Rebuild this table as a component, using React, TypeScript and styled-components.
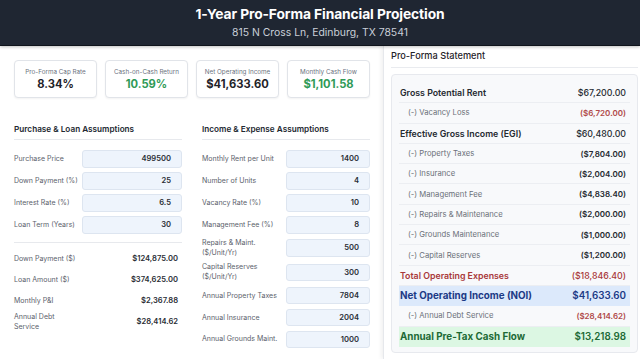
import React from "react";
import styled, { createGlobalStyle } from "styled-components";

const Global = createGlobalStyle`
  html, body { margin: 0; padding: 0; background: #ffffff; }
  body { font-family: Inter, "Noto Sans", Arial, sans-serif; color: #1f2937; }
  * { box-sizing: border-box; }
`;

const Page = styled.div`
  width: 640px;
  height: 359px;
  overflow: hidden;
  display: flex;
  flex-direction: column;
`;

const Header = styled.header`
  height: 46px;
  flex: none;
  background: #1f2632;
  border-bottom: 1px solid #0f141c;
  display: flex;
  flex-direction: column;
  align-items: center;
  justify-content: center;
  gap: 3px;
  box-shadow: 0 1px 3px rgba(0,0,0,0.25);
  position: relative;
  z-index: 2;
`;

const Title = styled.h1`
  margin: 0;
  font-size: 13.8px;
  font-weight: 700;
  color: #ffffff;
  letter-spacing: -0.1px;
  line-height: 17px;
`;

const Subtitle = styled.div`
  font-size: 10.4px;
  color: #c9cfd8;
  line-height: 13px;
`;

const Body = styled.div`
  flex: 1;
  display: flex;
  min-height: 0;
`;

const Main = styled.main`
  width: 383px;
  flex: none;
  padding: 14px 13px 0 14px;
  display: flex;
  flex-direction: column;
`;

const KpiRow = styled.div`
  display: grid;
  grid-template-columns: repeat(4, 1fr);
  gap: 8px;
`;

const KpiCard = styled.div`
  height: 38px;
  border: 1px solid #e1e4e9;
  border-radius: 4px;
  background: #fff;
  box-shadow: 0 1px 2px rgba(0,0,0,0.05);
  display: flex;
  flex-direction: column;
  align-items: center;
  justify-content: center;
  gap: 1px;
`;

const KpiLabel = styled.div`
  font-size: 6.3px;
  color: #6b7280;
  line-height: 8px;
`;

const KpiValue = styled.div<{ $green?: boolean }>`
  font-size: 11.2px;
  font-weight: 700;
  line-height: 14px;
  color: ${p => (p.$green ? "#2f9a57" : "#1f2329")};
`;

const Columns = styled.div`
  display: grid;
  grid-template-columns: 168px 168px;
  gap: 20px;
  margin-top: 25px;
`;

const Column = styled.section`
  display: flex;
  flex-direction: column;
`;

const SectionTitle = styled.h2`
  margin: 0;
  font-size: 8.2px;
  font-weight: 600;
  color: #222831;
  line-height: 12px;
  padding-bottom: 4px;
  border-bottom: 1px solid #e7e9ed;
`;

const Fields = styled.div`
  display: flex;
  flex-direction: column;
  gap: 4.4px;
  margin-top: 10px;
`;

const FieldRow = styled.div<{ $labelWidth: number }>`
  display: grid;
  grid-template-columns: ${p => p.$labelWidth}px 1fr;
  align-items: center;
`;

const FieldLabel = styled.label`
  font-size: 7px;
  color: #5b616b;
  line-height: 10px;
  white-space: nowrap;
`;

const InputBox = styled.div`
  height: 17.6px;
  background: #eef4fc;
  border: 1px solid #dde5f0;
  border-radius: 3px;
  display: flex;
  align-items: center;
  justify-content: flex-end;
  padding-right: 10px;
  font-size: 7.6px;
  font-weight: 600;
  color: #2a2e35;
`;

const Results = styled.div`
  margin-top: 8px;
  border-top: 1px solid #e7e9ed;
  padding-top: 6px;
  display: flex;
  flex-direction: column;
  gap: 1px;
`;

const ResultRow = styled.div`
  min-height: 20px;
  display: flex;
  align-items: center;
  justify-content: space-between;
  padding-right: 4px;
`;

const ResultLabel = styled.div`
  font-size: 7px;
  color: #5b616b;
  line-height: 10px;
  white-space: nowrap;
`;

const ResultValue = styled.div`
  font-size: 7.6px;
  font-weight: 600;
  color: #2a2e35;
`;

const Aside = styled.aside`
  flex: 1;
  background: #fff;
  border-left: 1px solid #e6e8ec;
  box-shadow: -2px 0 4px rgba(0,0,0,0.06);
  padding: 3px 2px 0 7px;
  display: flex;
  flex-direction: column;
`;

const AsideTitle = styled.h2`
  margin: 0;
  font-size: 9.2px;
  font-weight: 500;
  color: #1f2329;
  line-height: 14px;
  padding-bottom: 4px;
  border-bottom: 1px solid #e9ebef;
`;

const StatementCard = styled.div`
  margin-top: 6px;
  background: #f8f9fb;
  border: 1px solid #e7e9ee;
  border-radius: 4px;
  padding: 8px 7px 5px 7px;
  display: flex;
  flex-direction: column;
`;

type Kind = "main" | "sub" | "total" | "noi" | "cash";

const StRow = styled.div<{ $kind: Kind }>`
  height: 20.3px;
  flex: none;
  display: flex;
  align-items: center;
  justify-content: space-between;
  padding: 0 4px 0 ${p => (p.$kind === "sub" ? 9 : 1)}px;
  border-bottom: 1px solid ${p => (p.$kind === "noi" || p.$kind === "cash" ? "transparent" : "#eceef2")};
  background: ${p => (p.$kind === "noi" ? "#dce9fb" : p.$kind === "cash" ? "#dcf7e3" : "transparent")};
  &:last-child { border-bottom: none; }
`;

const StLabel = styled.span<{ $kind: Kind }>`
  font-size: ${p => (p.$kind === "sub" ? 7.7 : p.$kind === "noi" || p.$kind === "cash" ? 9.8 : 8.8)}px;
  font-weight: ${p => (p.$kind === "sub" ? 400 : p.$kind === "noi" || p.$kind === "cash" ? 700 : 600)};
  color: ${p =>
    p.$kind === "sub" ? "#6b7079" :
    p.$kind === "total" ? "#a8383a" :
    p.$kind === "noi" ? "#1c3a86" :
    p.$kind === "cash" ? "#1d6a36" : "#252a31"};
`;

const StValue = styled.span<{ $kind: Kind; $neg?: boolean }>`
  font-size: ${p => (p.$kind === "sub" ? 8 : p.$kind === "noi" || p.$kind === "cash" ? 9.8 : 8.8)}px;
  font-weight: ${p => (p.$kind === "noi" || p.$kind === "cash" ? 600 : p.$kind === "sub" ? 600 : 500)};
  color: ${p =>
    p.$kind === "noi" ? "#1c3a86" :
    p.$kind === "cash" ? "#1d6a36" :
    p.$neg && (p.$kind === "total") ? "#a8383a" :
    p.$neg ? "#b04a4a" : "#252a31"};
`;

const kpis = [
  { label: "Pro-Forma Cap Rate", value: "8.34%", green: false },
  { label: "Cash-on-Cash Return", value: "10.59%", green: true },
  { label: "Net Operating Income", value: "$41,633.60", green: false },
  { label: "Monthly Cash Flow", value: "$1,101.58", green: true },
];

const loanFields = [
  ["Purchase Price", "499500"],
  ["Down Payment (%)", "25"],
  ["Interest Rate (%)", "6.5"],
  ["Loan Term (Years)", "30"],
];

const incomeFields: [React.ReactNode, string][] = [
  ["Monthly Rent per Unit", "1400"],
  ["Number of Units", "4"],
  ["Vacancy Rate (%)", "10"],
  ["Management Fee (%)", "8"],
  [<>Repairs &amp; Maint.<br />($/Unit/Yr)</>, "500"],
  [<>Capital Reserves<br />($/Unit/Yr)</>, "300"],
  ["Annual Property Taxes", "7804"],
  ["Annual Insurance", "2004"],
  ["Annual Grounds Maint.", "1000"],
];

const results: [React.ReactNode, string][] = [
  ["Down Payment ($)", "$124,875.00"],
  ["Loan Amount ($)", "$374,625.00"],
  ["Monthly P&I", "$2,367.88"],
  [<>Annual Debt<br />Service</>, "$28,414.62"],
];

const statement: { label: string; value: string; kind: Kind; neg?: boolean }[] = [
  { label: "Gross Potential Rent", value: "$67,200.00", kind: "main" },
  { label: "(-) Vacancy Loss", value: "($6,720.00)", kind: "sub", neg: true },
  { label: "Effective Gross Income (EGI)", value: "$60,480.00", kind: "main" },
  { label: "(-) Property Taxes", value: "($7,804.00)", kind: "sub" },
  { label: "(-) Insurance", value: "($2,004.00)", kind: "sub" },
  { label: "(-) Management Fee", value: "($4,838.40)", kind: "sub" },
  { label: "(-) Repairs & Maintenance", value: "($2,000.00)", kind: "sub" },
  { label: "(-) Grounds Maintenance", value: "($1,000.00)", kind: "sub" },
  { label: "(-) Capital Reserves", value: "($1,200.00)", kind: "sub" },
  { label: "Total Operating Expenses", value: "($18,846.40)", kind: "total", neg: true },
  { label: "Net Operating Income (NOI)", value: "$41,633.60", kind: "noi" },
  { label: "(-) Annual Debt Service", value: "($28,414.62)", kind: "sub", neg: true },
  { label: "Annual Pre-Tax Cash Flow", value: "$13,218.98", kind: "cash" },
];

export default function App() {
  return (
    <Page>
      <Global />
      <Header>
        <Title>1-Year Pro-Forma Financial Projection</Title>
        <Subtitle>815 N Cross Ln, Edinburg, TX 78541</Subtitle>
      </Header>
      <Body>
        <Main>
          <KpiRow>
            {kpis.map(k => (
              <KpiCard key={k.label}>
                <KpiLabel>{k.label}</KpiLabel>
                <KpiValue $green={k.green}>{k.value}</KpiValue>
              </KpiCard>
            ))}
          </KpiRow>
          <Columns>
            <Column>
              <SectionTitle>Purchase &amp; Loan Assumptions</SectionTitle>
              <Fields>
                {loanFields.map(([l, v]) => (
                  <FieldRow key={l} $labelWidth={68}>
                    <FieldLabel>{l}</FieldLabel>
                    <InputBox>{v}</InputBox>
                  </FieldRow>
                ))}
              </Fields>
              <Results>
                {results.map(([l, v], i) => (
                  <ResultRow key={i}>
                    <ResultLabel>{l}</ResultLabel>
                    <ResultValue>{v}</ResultValue>
                  </ResultRow>
                ))}
              </Results>
            </Column>
            <Column>
              <SectionTitle>Income &amp; Expense Assumptions</SectionTitle>
              <Fields>
                {incomeFields.map(([l, v], i) => (
                  <FieldRow key={i} $labelWidth={84}>
                    <FieldLabel>{l}</FieldLabel>
                    <InputBox>{v}</InputBox>
                  </FieldRow>
                ))}
              </Fields>
            </Column>
          </Columns>
        </Main>
        <Aside>
          <AsideTitle>Pro-Forma Statement</AsideTitle>
          <StatementCard>
            {statement.map(r => (
              <StRow key={r.label} $kind={r.kind}>
                <StLabel $kind={r.kind}>{r.label}</StLabel>
                <StValue $kind={r.kind} $neg={r.neg}>{r.value}</StValue>
              </StRow>
            ))}
          </StatementCard>
        </Aside>
      </Body>
    </Page>
  );
}
